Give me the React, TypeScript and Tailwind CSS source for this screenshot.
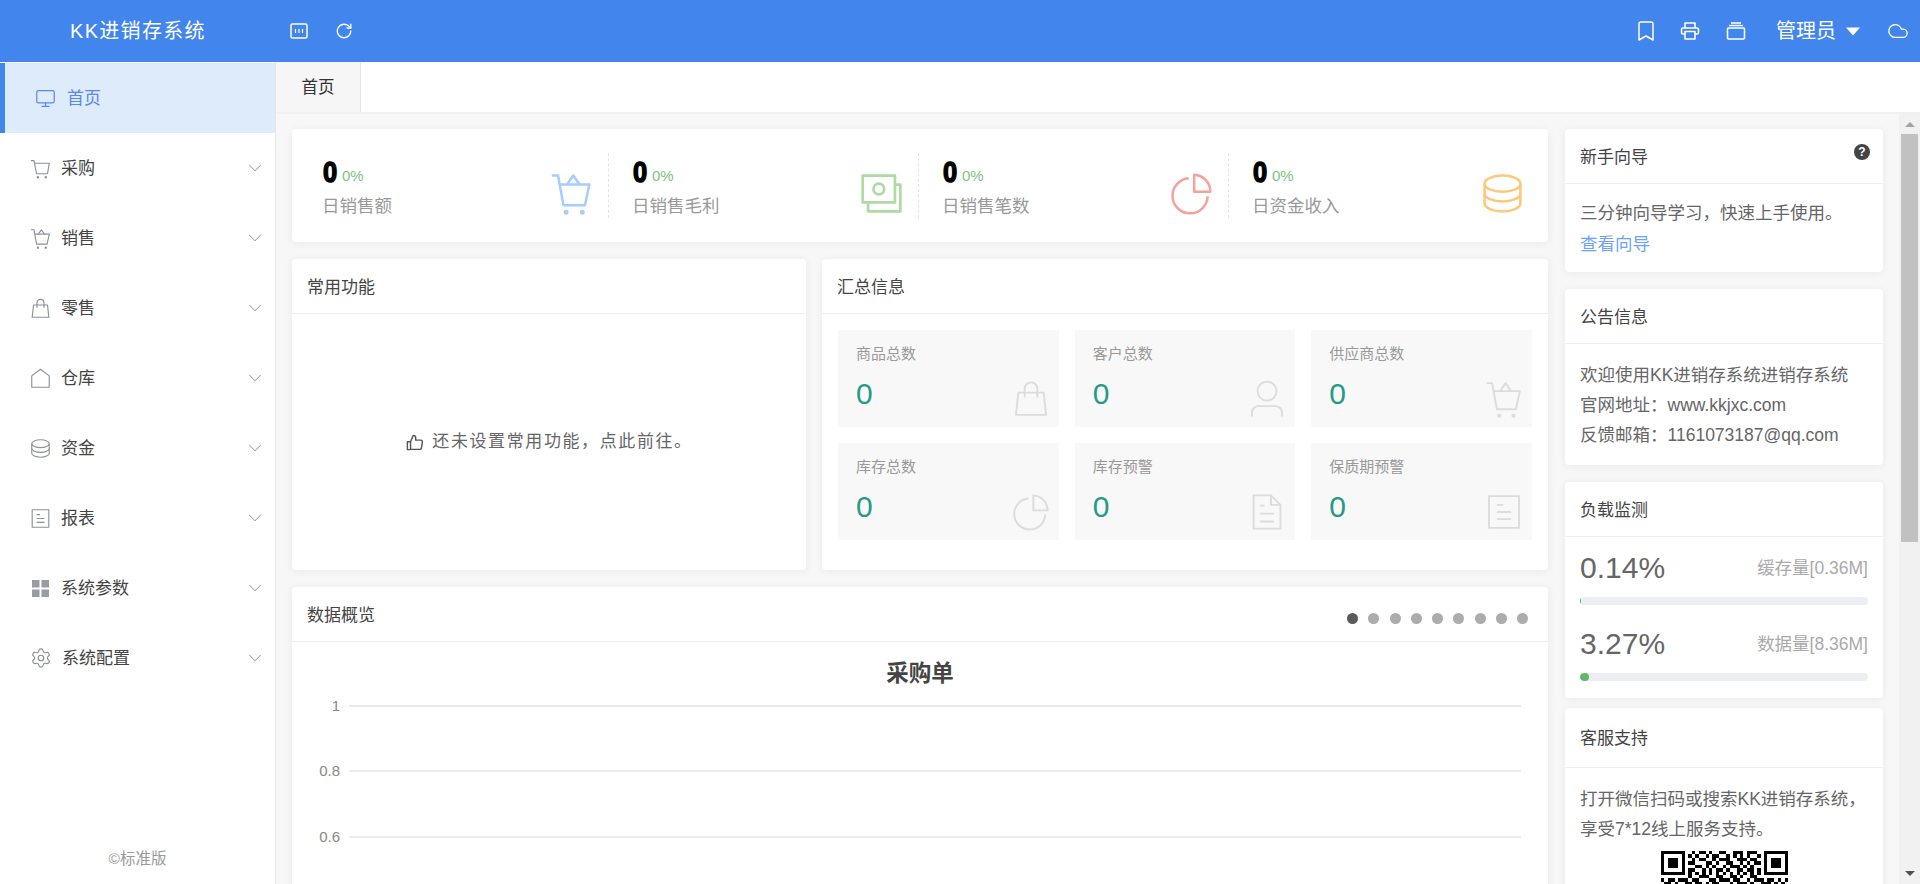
import { Bookmark, ChevronDown, Cloud, Monitor, RotateCw, Settings } from "lucide-react";
import type { ReactNode } from "react";

// line icons, all drawn on a 24 box
function Ico({ size, color, sw = 1.6, children }: { size: number; color: string; sw?: number; children: ReactNode }) {
  return (
    <svg width={size} height={size} viewBox="0 0 24 24" fill="none" stroke={color} strokeWidth={sw} strokeLinejoin="round" className="shrink-0">
      {children}
    </svg>
  );
}

const CartPlain = () => (
  <>
    <path d="M1 3h3.5l3 15h12.5l2-12H5.500" />
    <circle cx="9" cy="22" r=".7" />
    <circle cx="18" cy="22" r=".7" />
  </>
);
const CartFull = () => (
  <>
    <path d="M1 2h3.500l3 16.500h12l2.500-11.500H5.300" />
    <path d="M9.500 7l3.500-5 3.500 5" />
    <circle cx="9" cy="22.500" r=".7" />
    <circle cx="18" cy="22.500" r=".7" />
  </>
);
const Bag = () => (
  <>
    <path d="M4 8h16l1.500 14h-19z" />
    <path d="M8 11V5.500a4 4 0 0 1 8 0V11" />
  </>
);
const House = () => <path d="M12 1.500L22 9v13H2V9z" />;
const Coins = () => (
  <>
    <ellipse cx="12" cy="6.500" rx="10" ry="4.500" />
    <path d="M2 6.500v11c0 2.500 4.500 4.500 10 4.500s10-2 10-4.500v-11" />
    <path d="M2 12c0 2.500 4.500 4.500 10 4.500S22 14.500 22 12" />
  </>
);
const Report = () => (
  <>
    <rect x="2.500" y="2" width="19" height="20" />
    <path d="M7.500 7.500h4M7.500 12h9M7.500 16.500h9" />
  </>
);
const Person = () => (
  <>
    <circle cx="12" cy="7" r="6" />
    <path d="M2.500 23v-2.500a4 4 0 0 1 4-4h11a4 4 0 0 1 4 4V23" />
  </>
);
const Pie = () => (
  <>
    <path d="M10.500 3.500A9.800 9.800 0 1 0 21 13.500" />
    <path d="M13.500 1.500a9.500 9.500 0 0 1 9 9.500h-9z" />
  </>
);
const DocFold = () => (
  <>
    <path d="M3.500 1.500h11l6 6v15h-17z" />
    <path d="M14.500 1.500v6h6M7.500 8h3M7.500 13h9M7.500 18h9" />
  </>
);
const Money = () => (
  <>
    <rect x="1.500" y="2" width="18" height="15" />
    <path d="M19.500 7h3v15h-18v-5" />
    <circle cx="10.500" cy="9.500" r="3" />
  </>
);

const menu = [
  { name: "采购", icon: <Ico size={21} color="#8d9099" sw={1.3}><CartPlain /></Ico> },
  { name: "销售", icon: <Ico size={21} color="#8d9099" sw={1.3}><CartFull /></Ico> },
  { name: "零售", icon: <Ico size={21} color="#8d9099" sw={1.3}><Bag /></Ico> },
  { name: "仓库", icon: <Ico size={21} color="#8d9099" sw={1.3}><House /></Ico> },
  { name: "资金", icon: <Ico size={21} color="#8d9099" sw={1.3}><Coins /></Ico> },
  { name: "报表", icon: <Ico size={21} color="#8d9099" sw={1.3}><Report /></Ico> },
  {
    name: "系统参数",
    icon: (
      <svg width="21" height="21" viewBox="0 0 21 21" fill="#9a9ca3" className="shrink-0">
        <rect x="2" y="2" width="7.500" height="7.500" />
        <rect x="11.500" y="2" width="7.500" height="7.500" />
        <rect x="2" y="11.500" width="7.500" height="7.500" />
        <rect x="11.500" y="11.500" width="7.500" height="7.500" />
      </svg>
    ),
  },
  { name: "系统配置", icon: <Settings size={22} color="#8d9099" strokeWidth={1.3} className="shrink-0" /> },
];

const stats = [
  { label: "日销售额", icon: <Ico size={43} color="#a6cdfb" sw={1.4}><CartFull /></Ico> },
  { label: "日销售毛利", icon: <Ico size={43} color="#aedaa3" sw={1.5}><Money /></Ico> },
  { label: "日销售笔数", icon: <Ico size={43} color="#f5a29c" sw={1.4}><Pie /></Ico> },
  { label: "日资金收入", icon: <Ico size={43} color="#fcc97c" sw={1.4}><Coins /></Ico> },
];

const tiles = [
  { label: "商品总数", icon: <Bag /> },
  { label: "客户总数", icon: <Person /> },
  { label: "供应商总数", icon: <CartFull /> },
  { label: "库存总数", icon: <Pie /> },
  { label: "库存预警", icon: <DocFold /> },
  { label: "保质期预警", icon: <Report /> },
];

// what can be seen of the qr code above the fold
const qr = [
  "1111111001011010011001110111001111111",
  "1000001010100101100101010100101000001",
  "1011101001011001011100111011001011101",
  "1011101011000110100110010101101011101",
  "1011101000110101001011101010001011101",
  "1000001011001010110100110110101000001",
  "1111111010101010101010101010101111111",
  "0000000010011100110011010011000000000",
  "1011011101100011011101100101110110101",
  "0110100110110101100010111010011101010",
];

function Card({ title, className = "", head = "h-[55px]", right, children }: { title: string; className?: string; head?: string; right?: ReactNode; children: ReactNode }) {
  return (
    <div className={`bg-white rounded-[4px] shadow-[0_1px_8px_rgba(0,0,0,0.06)] flex flex-col ${className}`}>
      <div className={`${head} shrink-0 flex items-center justify-between px-[15px] pt-[3px] border-b border-[#eeeeee] text-[17px] text-[#444]`}>
        <span>{title}</span>
        {right}
      </div>
      {children}
    </div>
  );
}

function Bar({ pct, value, name }: { pct: string; value: string; name: string }) {
  return (
    <div>
      <div className="flex items-center justify-between h-[36px]">
        <span className="text-[30px] text-[#666]">{pct}</span>
        <span className="pt-[3px] text-[17.5px] text-[#aaa]">{name}</span>
      </div>
      <div className="mt-[12px] h-[8px] rounded-full bg-[#eceef4] overflow-hidden">
        <div className="h-full rounded-full bg-[#62b868]" style={{ width: value }} />
      </div>
    </div>
  );
}

export default function App() {
  return (
    <div className="w-[1920px] h-[884px] overflow-hidden flex flex-col bg-white text-[#444] font-['Liberation_Sans','Noto_Sans_CJK_SC',sans-serif]">
      {/* top bar */}
      <header className="h-[62px] shrink-0 bg-[#4285ed] text-white flex items-center">
        <div className="w-[290px] pl-[70px] text-[20px] tracking-[1.3px]">KK进销存系统</div>
        <svg width="18" height="16" viewBox="0 0 18 16" fill="none" stroke="white" strokeWidth="1.500">
          <rect x="1" y="1" width="16" height="14" rx="1.500" />
          <path d="M5.500 6v4M9 6v4M12.500 6v4" strokeWidth="1.200" />
        </svg>
        <RotateCw size={18} strokeWidth={1.8} className="ml-[27px]" />
        <div className="flex-1" />
        <Bookmark size={24} strokeWidth={1.5} />
        <svg width="20" height="20" viewBox="0 0 20 20" fill="none" stroke="white" strokeWidth="1.600" strokeLinejoin="round" className="ml-[22px]">
          <path d="M5 7V2h10v5M5 13H3a1.500 1.500 0 0 1-1.500-1.500v-3a1.500 1.500 0 0 1 1.500-1.500h14a1.500 1.500 0 0 1 1.500 1.500v3a1.500 1.500 0 0 1-1.500 1.500h-2" />
          <path d="M5 10.500h10V18H5z" />
        </svg>
        <svg width="20" height="20" viewBox="0 0 20 20" fill="none" stroke="white" strokeWidth="1.600" className="ml-[26px]">
          <rect x="1.500" y="7" width="17" height="11" rx="1" />
          <path d="M3 4.500h14M5 2h10" />
        </svg>
        <span className="ml-[30px] text-[20px]">管理员</span>
        <svg width="14" height="9" viewBox="0 0 14 9" fill="white" className="ml-[10px]">
          <path d="M0 .5h14L7 8.500z" />
        </svg>
        <Cloud size={22} strokeWidth={1.5} className="ml-[27px] mr-[11px]" />
      </header>

      <div className="flex-1 flex min-h-0">
        {/* side menu */}
        <aside className="w-[276px] shrink-0 border-r border-[#e6e6e6] flex flex-col text-[17px]">
          <div className="h-[70px] mt-px flex items-center gap-[11px] pl-[30px] border-l-[5px] border-[#4285ed] bg-[#ddebfb] text-[#5a87f0]">
            <Monitor size={21} strokeWidth={1.4} />
            <span className="pt-px">首页</span>
          </div>
          {menu.map((m) => (
            <div key={m.name} className="h-[70px] flex items-center pl-[30px] pr-[9px]">
              {m.icon}
              <span className="ml-[10px] pt-px flex-1">{m.name}</span>
              <ChevronDown size={22} strokeWidth={1.1} color="#a0a0a0" />
            </div>
          ))}
          <div className="flex-1 flex items-end justify-center pb-[14px] text-[15.5px] text-[#999]">©标准版</div>
        </aside>

        <main className="flex-1 min-w-0 flex flex-col">
          {/* tabs */}
          <div className="h-[52px] shrink-0 flex border-b-2 border-[#f0f0f0]">
            <div className="w-[85px] pt-px bg-[#f6f6f6] border-r border-[#e6e6e6] flex items-center justify-center text-[16.5px] text-[#333]">首页</div>
          </div>

          <div className="flex-1 min-h-0 flex bg-[#f7f7f7] overflow-hidden">
            <div className="w-[1272px] shrink-0 pl-[16px] pt-[15px] flex flex-col gap-[17px]">
              {/* day figures */}
              <div className="h-[113px] shrink-0 bg-white rounded-[4px] shadow-[0_1px_8px_rgba(0,0,0,0.06)] pl-[7px] pt-[24px] flex">
                {stats.map((s, i) => (
                  <div key={s.label} className={`w-[310px] h-[65px] pl-[24px] pr-[15px] flex justify-between ${i < 3 ? "border-r border-dashed border-[#e4e4e4]" : ""}`}>
                    <div>
                      <div className="h-[36px] flex items-center gap-[3px]">
                        <span className="inline-block scale-x-[0.85] origin-left w-[16px] text-[30px] font-bold text-black [-webkit-text-stroke:1.5px_black]">0</span>
                        <span className="mt-[11px] text-[15px] text-[#7cc47f]">0%</span>
                      </div>
                      <div className="mt-[5px] -ml-px text-[17.5px] leading-[24px] text-[#999]">{s.label}</div>
                    </div>
                    <div className="mt-[19px]">{s.icon}</div>
                  </div>
                ))}
              </div>

              <div className="h-[311px] shrink-0 flex gap-[16px]">
                <Card title="常用功能" className="w-[514px]">
                  <div className="flex-1 flex items-center justify-center gap-[8px] text-[17px] tracking-[1.6px] text-[#666]">
                    <svg width="19" height="19" viewBox="0 0 24 24" fill="none" stroke="#555" strokeWidth="1.800" strokeLinejoin="round">
                      <path d="M7 11l3.500-8c1.800 0 3 1.200 3 3v3h6.500a2 2 0 0 1 2 2.300l-1.300 7.700a2 2 0 0 1-2 1.700H7z" />
                      <path d="M7 11H3v10h4" />
                    </svg>
                    <span>还未设置常用功能，点此前往。</span>
                  </div>
                </Card>
                <Card title="汇总信息" className="w-[726px]">
                  <div className="grid grid-cols-3 gap-[16px] p-[16px]">
                    {tiles.map((t) => (
                      <div key={t.label} className="h-[97px] bg-[#f8f8f8] pl-[18px] pr-[9px] pt-[13px] flex justify-between">
                        <div>
                          <div className="text-[15px] leading-[22px] text-[#999]">{t.label}</div>
                          <div className="mt-[10px] text-[30px] leading-[38px] text-[#279a87]">0</div>
                        </div>
                        <div className="mt-[37px]">
                          <Ico size={38} color="#dcdcdc" sw={1.2}>{t.icon}</Ico>
                        </div>
                      </div>
                    ))}
                  </div>
                </Card>
              </div>

              <Card
                title="数据概览"
                className="h-[400px] shrink-0"
                right={
                  <div className="flex gap-[10.25px] pr-[5px] mt-[6px]">
                    <span className="w-[11px] h-[11px] rounded-full bg-[#5a5a5a]" />
                    {[1, 2, 3, 4, 5, 6, 7, 8].map((d) => (
                      <span key={d} className="w-[11px] h-[11px] rounded-full bg-[#acacac]" />
                    ))}
                  </div>
                }
              >
                <div className="pt-[16px] h-[31px] text-center text-[22.5px] leading-[32px] font-bold text-[#444]">采购单</div>
                {["1", "0.8", "0.6"].map((v) => (
                  <div key={v} className="h-[65.5px] flex items-center pr-[27px] text-[15px] text-[#888]">
                    <span className="w-[48px] text-right">{v}</span>
                    <span className="ml-[9px] flex-1 h-[2px] bg-[#eaeaf0]" />
                  </div>
                ))}
              </Card>
            </div>

            {/* right column */}
            <div className="w-[318px] shrink-0 ml-[17px] pt-[15px] flex flex-col text-[17.5px] text-[#666]">
              <Card
                title="新手向导"
                className="h-[143px] shrink-0"
                right={
                  <svg width="16" height="16" viewBox="0 0 16 16" className="mb-[12px] -mr-[2px]">
                    <circle cx="8" cy="8" r="8" fill="#444" />
                    <text x="8" y="12" textAnchor="middle" fontSize="12" fontWeight="bold" fill="white">?</text>
                  </svg>
                }
              >
                <div className="px-[15px] pt-[14px] leading-[31px]">
                  <div>三分钟向导学习，快速上手使用。</div>
                  <div className="text-[#6ea4f7]">查看向导</div>
                </div>
              </Card>
              <Card title="公告信息" className="h-[176px] shrink-0 mt-[17px]">
                <div className="px-[15px] pt-[16px] leading-[30px]">
                  <div>欢迎使用KK进销存系统进销存系统</div>
                  <div>官网地址：www.kkjxc.com</div>
                  <div>反馈邮箱：1161073187@qq.com</div>
                </div>
              </Card>
              <Card title="负载监测" className="h-[216px] shrink-0 mt-[17px]">
                <div className="px-[15px] pt-[12px] flex flex-col gap-[20px]">
                  <Bar pct="0.14%" value="1px" name="缓存量[0.36M]" />
                  <Bar pct="3.27%" value="9px" name="数据量[8.36M]" />
                </div>
              </Card>
              <Card title="客服支持" head="h-[60px]" className="h-[320px] shrink-0 mt-[10px]">
                <div className="px-[15px] pt-[16px] leading-[30px]">
                  <div className="whitespace-nowrap">打开微信扫码或搜索KK进销存系统，</div>
                  <div>享受7*12线上服务支持。</div>
                  <svg width="127" height="127" viewBox="0 0 37 37" className="mx-auto mt-[7px]" shapeRendering="crispEdges">
                    {qr.map((row, y) =>
                      row.split("").map((c, x) => (c === "1" ? <rect key={`${x}-${y}`} x={x} y={y} width="1" height="1" fill="black" /> : null)),
                    )}
                  </svg>
                </div>
              </Card>
            </div>

            {/* scrollbar */}
            <div className="w-[21px] shrink-0 ml-[16px] bg-[#f1f1f1] flex flex-col items-center">
              <div className="h-[20px] flex items-center">
                <div className="w-0 h-0 border-x-[5px] border-x-transparent border-b-[5px] border-b-[#a3a3a3]" />
              </div>
              <div className="w-[17px] h-[408px] bg-[#c1c1c1]" />
              <div className="flex-1 flex items-end pb-[8px]">
                <div className="w-0 h-0 border-x-[5px] border-x-transparent border-t-[5px] border-t-[#505050]" />
              </div>
            </div>
          </div>
        </main>
      </div>
    </div>
  );
}
